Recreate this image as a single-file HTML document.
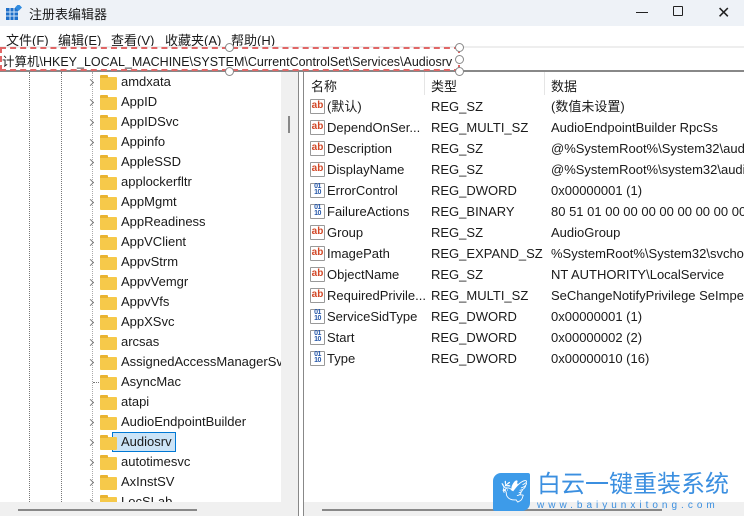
<!DOCTYPE html>
<html><head><meta charset="utf-8"><style>
*{margin:0;padding:0;box-sizing:border-box}
body{width:744px;height:516px;overflow:hidden;background:#fff;font-family:"Liberation Sans","Noto Sans CJK SC",sans-serif;font-size:13px;color:#1a1a1a;position:relative}
.a{position:absolute;white-space:nowrap}
#title{left:0;top:0;width:744px;height:26px;background:#eef2f7}
.t{position:absolute;left:121px;height:20px;line-height:20px;white-space:nowrap}
.f{position:absolute;left:100px;width:17px;height:13px;background:#f6c94a;border-radius:1px}
.f:before{content:"";position:absolute;left:0;top:-2px;width:8px;height:3px;background:#e9b330;border-radius:1px 1px 0 0}
.c{position:absolute;left:88px;width:5px;height:5px;border-right:1px solid #777;border-top:1px solid #777;transform:rotate(45deg);background:#fff}
.r{position:absolute;height:21px;line-height:21px;white-space:nowrap}
.ic{position:absolute;left:6px;width:15px;height:15px;border:1px solid #999;background:#fff;font-size:10px;font-weight:bold;line-height:12px;text-align:center;color:#d24726;border-radius:1px}
.ic.b{color:#2456a8;font-size:7px;line-height:6px;letter-spacing:-0.5px}
#list{position:absolute;left:304px;top:72px;width:440px;height:430px;overflow:hidden}
</style></head><body>
<div class="a" id="title"></div>
<svg class="a" style="left:6px;top:5px" width="16" height="16" viewBox="0 0 16 16"><rect x="0" y="3" width="12" height="12" fill="#1e6fc9"/><path d="M4 3v12M8 3v12M0 7h12M0 11h12" stroke="#cfe3f7" stroke-width="1"/><rect x="10" y="0" width="5" height="5" transform="rotate(45 12.5 2.5)" fill="#2f8be0"/></svg>
<div class="a" style="left:29px;top:4px;font-size:13px">注册表编辑器</div>
<div class="a" style="left:636px;top:12px;width:12px;height:1px;background:#222"></div>
<div class="a" style="left:673px;top:6px;width:10px;height:10px;border:1px solid #222;border-radius:1px"></div>
<div class="a" style="left:717px;top:3px;font-size:16px;color:#222">✕</div>
<div class="a" style="left:6px;top:30px">文件(F)</div>
<div class="a" style="left:58px;top:30px">编辑(E)</div>
<div class="a" style="left:111px;top:30px">查看(V)</div>
<div class="a" style="left:165px;top:30px">收藏夹(A)</div>
<div class="a" style="left:231px;top:30px">帮助(H)</div>
<div class="a" style="left:0;top:46px;width:744px;height:2px;background:#eee"></div>
<div class="a" style="left:0;top:70px;width:744px;height:2px;background:#888"></div>
<div class="a" style="left:0;top:47px;width:460px;height:24px;border:2px dashed #e06666"></div>
<div class="a" style="left:2px;top:51px;font-size:12.5px">计算机\HKEY_LOCAL_MACHINE\SYSTEM\CurrentControlSet\Services\Audiosrv</div>
<div class="a" style="left:455px;top:55px;width:9px;height:9px;border:1px solid #888;border-radius:50%;background:#fff"></div>
<div class="a" style="left:225px;top:43px;width:9px;height:9px;border:1px solid #888;border-radius:50%;background:#fff"></div>
<div class="a" style="left:225px;top:67px;width:9px;height:9px;border:1px solid #888;border-radius:50%;background:#fff"></div>
<div class="a" style="left:455px;top:43px;width:9px;height:9px;border:1px solid #888;border-radius:50%;background:#fff"></div>
<div class="a" style="left:455px;top:67px;width:9px;height:9px;border:1px solid #888;border-radius:50%;background:#fff"></div>

<!-- tree -->
<div class="a" style="left:0;top:72px;width:281px;height:430px;overflow:hidden">
<div class="a" style="left:29px;top:0;height:430px;border-left:1px dotted #777"></div>
<div class="a" style="left:61px;top:0;height:430px;border-left:1px dotted #777"></div>
<div class="a" style="left:92px;top:0;height:430px;border-left:1px dotted #aaa"></div>
<div class="a" style="left:93px;top:310px;width:6px;border-top:1px dotted #777"></div>
</div>
<div class="a" style="left:281px;top:72px;width:17px;height:430px;background:#f0f0f0"></div>
<div class="a" style="left:288px;top:116px;width:2px;height:17px;background:#888"></div>
<div class="a" style="left:298px;top:72px;width:1px;height:444px;background:#888"></div>
<div class="a" style="left:303px;top:72px;width:1px;height:444px;background:#888"></div>
<div class="a" style="left:0;top:502px;width:298px;height:14px;background:#f0f0f0"></div>
<div class="a" style="left:18px;top:509px;width:179px;height:2px;background:#888"></div>
<div class="a" style="left:304px;top:502px;width:440px;height:14px;background:#f0f0f0"></div>
<div class="a" style="left:322px;top:509px;width:340px;height:2px;background:#888"></div>

<div class="a" style="left:0;top:72px;width:281px;height:430px;overflow:hidden">
<div class="a" style="left:112px;top:360px;width:64px;height:20px;background:#cce4f7;border:1px solid #0078d4"></div>
<div class="c" style="top:8px"></div><div class="f" style="top:5px"></div><div class="t" style="top:0">amdxata</div>
<div class="c" style="top:28px"></div><div class="f" style="top:25px"></div><div class="t" style="top:20px">AppID</div>
<div class="c" style="top:48px"></div><div class="f" style="top:45px"></div><div class="t" style="top:40px">AppIDSvc</div>
<div class="c" style="top:68px"></div><div class="f" style="top:65px"></div><div class="t" style="top:60px">Appinfo</div>
<div class="c" style="top:88px"></div><div class="f" style="top:85px"></div><div class="t" style="top:80px">AppleSSD</div>
<div class="c" style="top:108px"></div><div class="f" style="top:105px"></div><div class="t" style="top:100px">applockerfltr</div>
<div class="c" style="top:128px"></div><div class="f" style="top:125px"></div><div class="t" style="top:120px">AppMgmt</div>
<div class="c" style="top:148px"></div><div class="f" style="top:145px"></div><div class="t" style="top:140px">AppReadiness</div>
<div class="c" style="top:168px"></div><div class="f" style="top:165px"></div><div class="t" style="top:160px">AppVClient</div>
<div class="c" style="top:188px"></div><div class="f" style="top:185px"></div><div class="t" style="top:180px">AppvStrm</div>
<div class="c" style="top:208px"></div><div class="f" style="top:205px"></div><div class="t" style="top:200px">AppvVemgr</div>
<div class="c" style="top:228px"></div><div class="f" style="top:225px"></div><div class="t" style="top:220px">AppvVfs</div>
<div class="c" style="top:248px"></div><div class="f" style="top:245px"></div><div class="t" style="top:240px">AppXSvc</div>
<div class="c" style="top:268px"></div><div class="f" style="top:265px"></div><div class="t" style="top:260px">arcsas</div>
<div class="c" style="top:288px"></div><div class="f" style="top:285px"></div><div class="t" style="top:280px">AssignedAccessManagerSvc</div>
<div class="f" style="top:305px"></div><div class="t" style="top:300px">AsyncMac</div>
<div class="c" style="top:328px"></div><div class="f" style="top:325px"></div><div class="t" style="top:320px">atapi</div>
<div class="c" style="top:348px"></div><div class="f" style="top:345px"></div><div class="t" style="top:340px">AudioEndpointBuilder</div>
<div class="c" style="top:368px"></div><div class="f" style="top:365px"></div><div class="t" style="top:360px">Audiosrv</div>
<div class="c" style="top:388px"></div><div class="f" style="top:385px"></div><div class="t" style="top:380px">autotimesvc</div>
<div class="c" style="top:408px"></div><div class="f" style="top:405px"></div><div class="t" style="top:400px">AxInstSV</div>
<div class="c" style="top:428px"></div><div class="f" style="top:425px"></div><div class="t" style="top:420px">LocSLab</div>
</div>

<!-- list -->
<div id="list">
<div class="a" style="left:120px;top:0;width:1px;height:23px;background:#e5e5e5"></div>
<div class="a" style="left:240px;top:0;width:1px;height:23px;background:#e5e5e5"></div>
<div class="a" style="left:7px;top:4px">名称</div>
<div class="a" style="left:127px;top:4px">类型</div>
<div class="a" style="left:247px;top:4px">数据</div>
<div class="ic" style="top:27px">ab</div><div class="r" style="left:23px;top:24px">(默认)</div><div class="r" style="left:127px;top:24px">REG_SZ</div><div class="r" style="left:247px;top:24px">(数值未设置)</div>
<div class="ic" style="top:48px">ab</div><div class="r" style="left:23px;top:45px">DependOnSer...</div><div class="r" style="left:127px;top:45px">REG_MULTI_SZ</div><div class="r" style="left:247px;top:45px">AudioEndpointBuilder RpcSs</div>
<div class="ic" style="top:69px">ab</div><div class="r" style="left:23px;top:66px">Description</div><div class="r" style="left:127px;top:66px">REG_SZ</div><div class="r" style="left:247px;top:66px">@%SystemRoot%\System32\audiosrv.dll</div>
<div class="ic" style="top:90px">ab</div><div class="r" style="left:23px;top:87px">DisplayName</div><div class="r" style="left:127px;top:87px">REG_SZ</div><div class="r" style="left:247px;top:87px">@%SystemRoot%\system32\audiosrv.dll</div>
<div class="ic b" style="top:111px">01<br>10</div><div class="r" style="left:23px;top:108px">ErrorControl</div><div class="r" style="left:127px;top:108px">REG_DWORD</div><div class="r" style="left:247px;top:108px">0x00000001 (1)</div>
<div class="ic b" style="top:132px">01<br>10</div><div class="r" style="left:23px;top:129px">FailureActions</div><div class="r" style="left:127px;top:129px">REG_BINARY</div><div class="r" style="left:247px;top:129px">80 51 01 00 00 00 00 00 00 00 00</div>
<div class="ic" style="top:153px">ab</div><div class="r" style="left:23px;top:150px">Group</div><div class="r" style="left:127px;top:150px">REG_SZ</div><div class="r" style="left:247px;top:150px">AudioGroup</div>
<div class="ic" style="top:174px">ab</div><div class="r" style="left:23px;top:171px">ImagePath</div><div class="r" style="left:127px;top:171px">REG_EXPAND_SZ</div><div class="r" style="left:247px;top:171px">%SystemRoot%\System32\svchost.exe</div>
<div class="ic" style="top:195px">ab</div><div class="r" style="left:23px;top:192px">ObjectName</div><div class="r" style="left:127px;top:192px">REG_SZ</div><div class="r" style="left:247px;top:192px">NT AUTHORITY\LocalService</div>
<div class="ic" style="top:216px">ab</div><div class="r" style="left:23px;top:213px">RequiredPrivile...</div><div class="r" style="left:127px;top:213px">REG_MULTI_SZ</div><div class="r" style="left:247px;top:213px">SeChangeNotifyPrivilege SeImpersonate</div>
<div class="ic b" style="top:237px">01<br>10</div><div class="r" style="left:23px;top:234px">ServiceSidType</div><div class="r" style="left:127px;top:234px">REG_DWORD</div><div class="r" style="left:247px;top:234px">0x00000001 (1)</div>
<div class="ic b" style="top:258px">01<br>10</div><div class="r" style="left:23px;top:255px">Start</div><div class="r" style="left:127px;top:255px">REG_DWORD</div><div class="r" style="left:247px;top:255px">0x00000002 (2)</div>
<div class="ic b" style="top:279px">01<br>10</div><div class="r" style="left:23px;top:276px">Type</div><div class="r" style="left:127px;top:276px">REG_DWORD</div><div class="r" style="left:247px;top:276px">0x00000010 (16)</div>
</div>

<!-- watermark -->
<div class="a" style="left:493px;top:473px;width:37px;height:38px;background:#3d9be9;border-radius:8px 2px 8px 2px"></div>
<div class="a" style="left:500px;top:480px;color:#fff;font-size:22px;line-height:24px">🕊</div>
<div class="a" style="left:537px;top:470px;color:#3b8fe0;font-size:24px;line-height:30px">白云一键重装系统</div>
<div class="a" style="left:537px;top:500px;color:#3b8fe0;font-size:10px;letter-spacing:4px;line-height:12px">www.baiyunxitong.com</div>
</body></html>
